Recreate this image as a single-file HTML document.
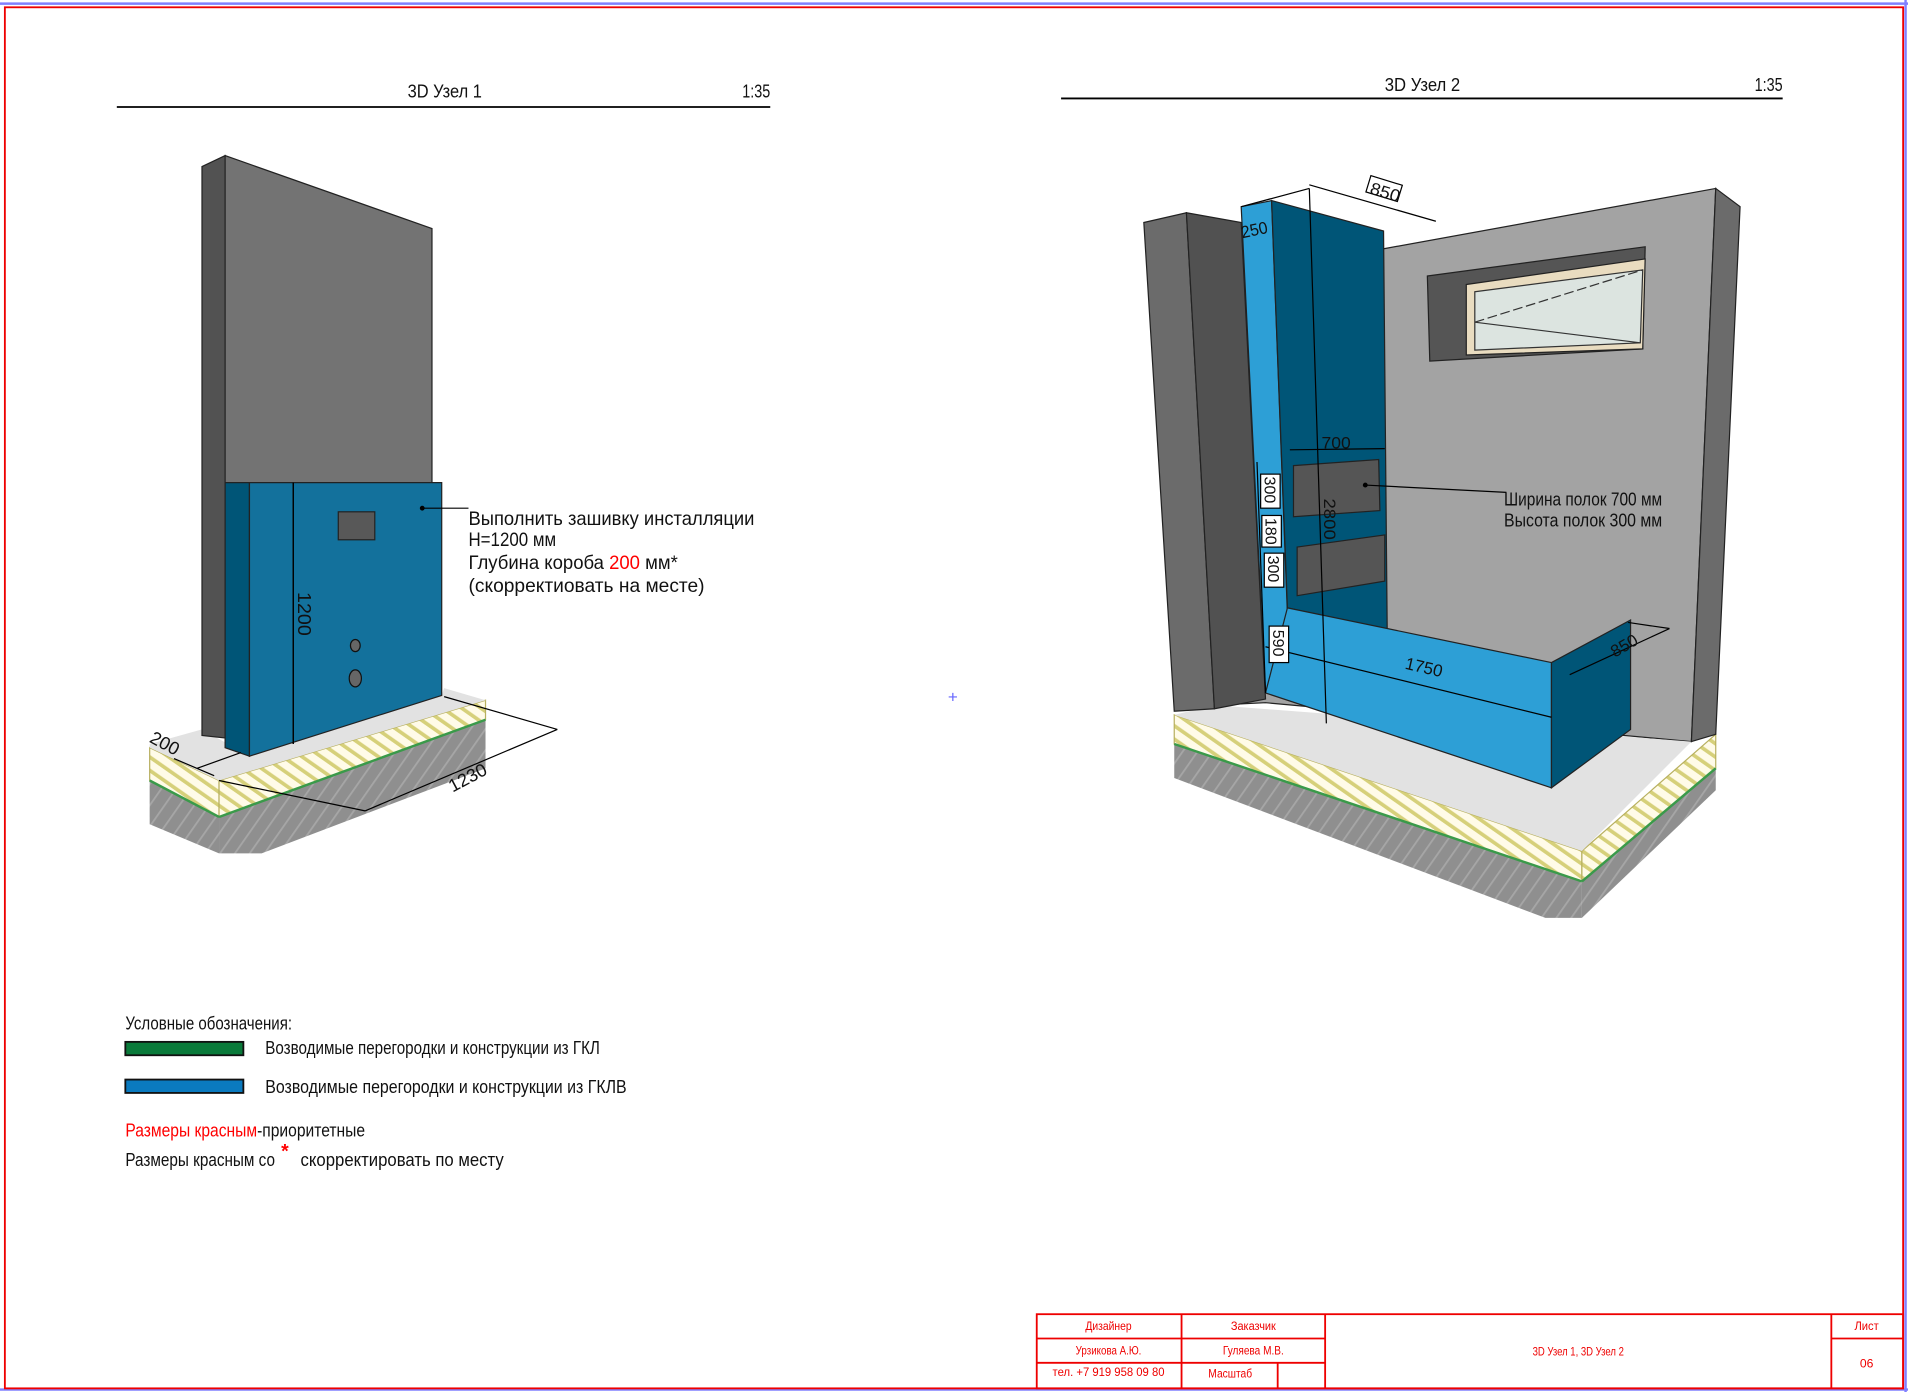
<!DOCTYPE html>
<html><head><meta charset="utf-8"><style>
html,body{margin:0;padding:0;background:#fff;width:1908px;height:1392px;overflow:hidden}
svg{display:block}
text{font-family:"Liberation Sans Narrow","Liberation Sans",sans-serif;fill:#111}
</style></head><body>
<svg width="1908" height="1392" viewBox="0 0 1568 1145" preserveAspectRatio="none" xmlns="http://www.w3.org/2000/svg">
<defs>
<pattern id="hy" width="9" height="9" patternUnits="userSpaceOnUse" patternTransform="rotate(-55)">
<rect width="9" height="9" fill="#fffbe8"/><rect width="3" height="9" fill="#d6d07a"/></pattern>
<pattern id="hg" width="10" height="10" patternUnits="userSpaceOnUse" patternTransform="rotate(35)">
<rect width="10" height="10" fill="#8f8f8f"/><rect width="1.5" height="10" fill="#a6a6a6"/></pattern>
</defs>
<rect width="1568" height="1145" fill="#fff"/>
<line x1="0" y1="3" x2="1568" y2="3" stroke="#8080ff" stroke-width="2"/>
<line x1="0" y1="1143" x2="1568" y2="1143" stroke="#8080ff" stroke-width="2"/>
<line x1="1566" y1="0" x2="1566" y2="1145" stroke="#8080ff" stroke-width="2"/>
<rect x="4" y="6" width="1560" height="1136" fill="none" stroke="#e00" stroke-width="1.5"/>
<text x="779" y="578" style="fill:#66f;font-size:14px">+</text>

<!-- Titles -->
<text x="335" y="80" font-size="15" textLength="61" lengthAdjust="spacingAndGlyphs">3D Узел 1</text>
<text x="610" y="80" font-size="15" textLength="23" lengthAdjust="spacingAndGlyphs">1:35</text>
<line x1="96" y1="88" x2="633" y2="88" stroke="#000" stroke-width="1.5"/>
<text x="1138" y="75" font-size="15" textLength="62" lengthAdjust="spacingAndGlyphs">3D Узел 2</text>
<text x="1442" y="75" font-size="15" textLength="23" lengthAdjust="spacingAndGlyphs">1:35</text>
<line x1="872" y1="81" x2="1465" y2="81" stroke="#000" stroke-width="1.5"/>

<!-- Left drawing -->
<polygon points="123,615 180,642 180,672 123,642" fill="url(#hy)" stroke="#b8b060" stroke-width="1"/>
<polygon points="180,642 399,576 399,592 180,672" fill="url(#hy)" stroke="#b8b060" stroke-width="1"/>
<polygon points="123,642 180,672 180,702 123,678" fill="url(#hg)"/>
<polygon points="180,672 399,592 399,632 215,702 180,702" fill="url(#hg)"/>
<line x1="123" y1="642" x2="180" y2="672" stroke="#3a9a4a" stroke-width="2"/>
<line x1="180" y1="672" x2="399" y2="592" stroke="#3a9a4a" stroke-width="2"/>
<polygon points="123,612 166,600 205,622 363,572 365,566 399,576 180,642 123,615" fill="#e2e2e2"/>
<polygon points="166,137 185,128 185,607 166,605" fill="#525252" stroke="#222" stroke-width="1"/>
<polygon points="185,128 355,188 355,397 185,397" fill="#737373" stroke="#222" stroke-width="1"/>
<polygon points="185,397 205,397 205,622 185,615" fill="#005577" stroke="#222" stroke-width="1"/>
<polygon points="205,397 363,397 363,572 205,622" fill="#13719c" stroke="#222" stroke-width="1"/>
<line x1="241" y1="397" x2="241" y2="612" stroke="#000" stroke-width="1.2"/>
<rect x="278" y="421" width="30" height="23" fill="#585858" stroke="#222"/>
<ellipse cx="292" cy="531" rx="4" ry="5" fill="#666" stroke="#111"/>
<ellipse cx="292" cy="558" rx="5" ry="7" fill="#666" stroke="#111"/>
<text transform="translate(245,487) rotate(90)" font-size="15" textLength="36" lengthAdjust="spacingAndGlyphs">1200</text>
<circle cx="347" cy="418" r="2" fill="#000"/>
<line x1="347" y1="418" x2="385" y2="418" stroke="#000"/>
<text x="385" y="432" font-size="16" textLength="235" lengthAdjust="spacingAndGlyphs">Выполнить зашивку инсталляции</text>
<text x="385" y="449" font-size="16" textLength="72" lengthAdjust="spacingAndGlyphs">Н=1200 мм</text>
<text x="385" y="468" font-size="16" textLength="172" lengthAdjust="spacingAndGlyphs">Глубина короба <tspan style="fill:#f00">200</tspan> мм*</text>
<text x="385" y="487" font-size="16" textLength="194" lengthAdjust="spacingAndGlyphs">(скорректиовать на месте)</text>
<line x1="143" y1="624" x2="176" y2="638" stroke="#000"/>
<line x1="162" y1="632" x2="198" y2="619" stroke="#000"/>
<line x1="180" y1="642" x2="300" y2="667" stroke="#000"/>
<line x1="300" y1="667" x2="458" y2="600" stroke="#000"/>
<line x1="365" y1="573" x2="458" y2="600" stroke="#000"/>
<text transform="translate(122,610) rotate(28)" font-size="15">200</text>
<text transform="translate(372,652) rotate(-28)" font-size="15">1230</text>

<!-- Right drawing -->
<polygon points="965,588 1300,700 1300,725 965,612" fill="url(#hy)" stroke="#b8b060"/>
<polygon points="1300,700 1410,604 1410,632 1300,725" fill="url(#hy)" stroke="#b8b060"/>
<polygon points="965,612 1300,725 1300,755 1270,755 965,640 965,612" fill="url(#hg)"/>
<polygon points="1300,725 1410,632 1410,650 1300,755" fill="url(#hg)"/>
<line x1="965" y1="612" x2="1300" y2="725" stroke="#3a9a4a" stroke-width="2"/>
<line x1="1300" y1="725" x2="1410" y2="632" stroke="#3a9a4a" stroke-width="2"/>
<polygon points="1135,205 1410,155 1390,610 1040,578 1000,580" fill="#a3a3a3" stroke="#222"/>
<polygon points="965,588 998,580 1390,610 1300,700" fill="#e2e2e2"/>
<polygon points="940,183 975,175 998,583 965,585" fill="#6b6b6b" stroke="#222"/>
<polygon points="975,175 1020,183 1040,575 998,583" fill="#515151" stroke="#222"/>
<polygon points="1410,155 1430,170 1410,604 1390,610" fill="#6b6b6b" stroke="#222"/>
<polygon points="1173,227 1352,203 1350,287 1175,297" fill="#555" stroke="#222"/>
<polygon points="1205,234 1352,213 1350,287 1205,292" fill="#e9dcc0" stroke="#222"/>
<polygon points="1212,240 1350,222 1348,282 1212,288" fill="#dce4e0" stroke="#333"/>
<line x1="1212" y1="265" x2="1350" y2="222" stroke="#333" stroke-dasharray="8 3"/>
<line x1="1212" y1="265" x2="1348" y2="282" stroke="#333"/>
<polygon points="1020,170 1045,165 1058,505 1040,570" fill="#2d9fd6" stroke="#222"/>
<polygon points="1045,165 1137,190 1140,518 1058,500" fill="#005577" stroke="#222"/>
<polygon points="1063,383 1133,378 1134,420 1063,425" fill="#555" stroke="#222"/>
<polygon points="1066,450 1138,440 1138,478 1066,490" fill="#555" stroke="#222"/>
<polygon points="1040,570 1058,500 1275,545 1275,648" fill="#2d9fd6" stroke="#222"/>
<polygon points="1275,545 1340,510 1340,600 1275,648" fill="#005577" stroke="#222"/>
<line x1="1076" y1="155" x2="1090" y2="595" stroke="#000"/>
<line x1="1020" y1="170" x2="1076" y2="155" stroke="#000"/>
<line x1="1076" y1="152" x2="1180" y2="182" stroke="#000"/>
<line x1="1060" y1="370" x2="1138" y2="369" stroke="#000"/>
<line x1="1040" y1="532" x2="1275" y2="590" stroke="#000"/>
<line x1="1290" y1="555" x2="1372" y2="517" stroke="#000"/>
<line x1="1338" y1="512" x2="1372" y2="517" stroke="#000"/>
<line x1="1033" y1="380" x2="1040" y2="570" stroke="#000"/>
<rect x="1124" y="148" width="27" height="14" fill="#fff" stroke="#000" transform="rotate(17 1137 155)"/>
<text transform="translate(1125,159) rotate(17)" font-size="14" textLength="25" lengthAdjust="spacingAndGlyphs">850</text>
<text transform="translate(1021,196) rotate(-12)" font-size="14" textLength="22" lengthAdjust="spacingAndGlyphs">250</text>
<text x="1086" y="369" font-size="14" textLength="24" lengthAdjust="spacingAndGlyphs">700</text>
<rect x="1036" y="390" width="16" height="28" fill="#fff" stroke="#000"/>
<text transform="translate(1039,392) rotate(90)" font-size="13" textLength="22" lengthAdjust="spacingAndGlyphs">300</text>
<rect x="1037" y="424" width="16" height="26" fill="#fff" stroke="#000"/>
<text transform="translate(1040,426) rotate(90)" font-size="13" textLength="22" lengthAdjust="spacingAndGlyphs">180</text>
<rect x="1039" y="455" width="16" height="28" fill="#fff" stroke="#000"/>
<text transform="translate(1042,457) rotate(90)" font-size="13" textLength="22" lengthAdjust="spacingAndGlyphs">300</text>
<rect x="1043" y="515" width="16" height="30" fill="#fff" stroke="#000"/>
<text transform="translate(1046,518) rotate(90)" font-size="13" textLength="22" lengthAdjust="spacingAndGlyphs">590</text>
<text transform="translate(1088,410) rotate(90)" font-size="14" textLength="34" lengthAdjust="spacingAndGlyphs">2800</text>
<text transform="translate(1154,550) rotate(13)" font-size="14">1750</text>
<text transform="translate(1327,541) rotate(-30)" font-size="14">850</text>
<circle cx="1122" cy="399" r="2" fill="#000"/>
<line x1="1122" y1="399" x2="1238" y2="405" stroke="#000"/>
<text x="1236" y="416" font-size="15" textLength="130" lengthAdjust="spacingAndGlyphs">Ширина полок 700 мм</text>
<text x="1236" y="433" font-size="15" textLength="130" lengthAdjust="spacingAndGlyphs">Высота полок 300 мм</text>

<!-- Legend -->
<text x="103" y="847" font-size="15" textLength="137" lengthAdjust="spacingAndGlyphs">Условные обозначения:</text>
<rect x="103" y="857" width="97" height="11" fill="#0a7a3a" stroke="#111" stroke-width="1.5"/>
<text x="218" y="867" font-size="15" textLength="275" lengthAdjust="spacingAndGlyphs">Возводимые перегородки и конструкции из ГКЛ</text>
<rect x="103" y="888" width="97" height="11" fill="#0a7abf" stroke="#111" stroke-width="1.5"/>
<text x="218" y="899" font-size="15" textLength="297" lengthAdjust="spacingAndGlyphs">Возводимые перегородки и конструкции из ГКЛВ</text>
<text x="103" y="935" font-size="15" textLength="197" lengthAdjust="spacingAndGlyphs"><tspan style="fill:#f00">Размеры красным</tspan>-приоритетные</text>
<text x="103" y="959" font-size="15" textLength="123" lengthAdjust="spacingAndGlyphs">Размеры красным со</text>
<text x="231" y="952" font-size="16" style="fill:#f00;font-weight:bold">*</text>
<text x="247" y="959" font-size="15" textLength="167" lengthAdjust="spacingAndGlyphs">скорректировать по месту</text>

<!-- Title block -->
<g stroke="#e00" stroke-width="1.5" fill="none">
<rect x="852" y="1081" width="712" height="61"/>
<line x1="971" y1="1081" x2="971" y2="1142"/>
<line x1="1089" y1="1081" x2="1089" y2="1142"/>
<line x1="1505" y1="1081" x2="1505" y2="1142"/>
<line x1="852" y1="1101" x2="1089" y2="1101"/>
<line x1="852" y1="1121" x2="1089" y2="1121"/>
<line x1="1050" y1="1121" x2="1050" y2="1142"/>
<line x1="1505" y1="1101" x2="1564" y2="1101"/>
</g>
<g font-size="10" text-anchor="middle">
<text x="911" y="1094" style="fill:#e00" textLength="38" lengthAdjust="spacingAndGlyphs">Дизайнер</text>
<text x="1030" y="1094" style="fill:#e00" textLength="37" lengthAdjust="spacingAndGlyphs">Заказчик</text>
<text x="911" y="1114" style="fill:#e00" textLength="54" lengthAdjust="spacingAndGlyphs">Урзикова А.Ю.</text>
<text x="1030" y="1114" style="fill:#e00" textLength="50" lengthAdjust="spacingAndGlyphs">Гуляева М.В.</text>
<text x="911" y="1132" style="fill:#e00" textLength="92" lengthAdjust="spacingAndGlyphs">тел. +7 919 958 09 80</text>
<text x="1011" y="1133" style="fill:#e00" textLength="36" lengthAdjust="spacingAndGlyphs">Масштаб</text>
<text x="1297" y="1115" style="fill:#e00" textLength="75" lengthAdjust="spacingAndGlyphs">3D Узел 1, 3D Узел 2</text>
<text x="1534" y="1094" style="fill:#e00" textLength="20" lengthAdjust="spacingAndGlyphs">Лист</text>
<text x="1534" y="1125" style="fill:#e00">06</text>
</g>
</svg>
</body></html>
